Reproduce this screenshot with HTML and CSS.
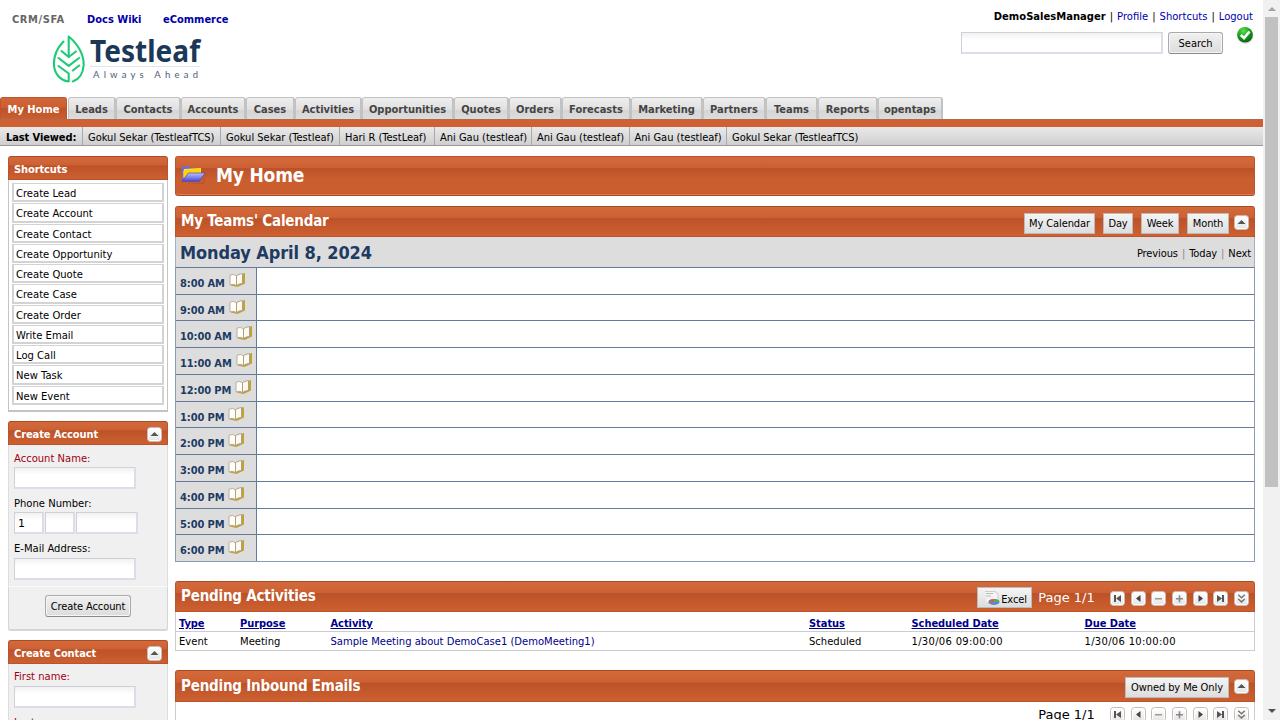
FILE: index.html
```html
<!DOCTYPE html>
<html lang="en">
<head>
<meta charset="utf-8">
<title>My Home | CRM/SFA</title>
<link rel="stylesheet" href="styles.css">
</head>
<body>
<svg class="defs" width="0" height="0">
  <defs>
    <linearGradient id="btn" x1="0" y1="0" x2="0" y2="1"><stop offset="0" stop-color="#fff"/><stop offset="1" stop-color="#e6e6e6"/></linearGradient>
    <linearGradient id="blue" x1="0" y1="0" x2="0" y2="1"><stop offset="0" stop-color="#b9c0ff"/><stop offset="1" stop-color="#4a4ad0"/></linearGradient>
    <radialGradient id="green" cx=".4" cy=".25" r=".8"><stop offset="0" stop-color="#5be04c"/><stop offset=".55" stop-color="#149a1c"/><stop offset="1" stop-color="#075a0b"/></radialGradient>
    <symbol id="base" viewBox="0 0 15 15"><rect x=".5" y=".5" width="14" height="14" rx="3" fill="#fff" stroke="#c9bab4"/><rect x="2" y="2" width="11" height="11" rx="1.500" fill="url(#btn)"/></symbol>
    <symbol id="up" viewBox="0 0 15 15"><use href="#base"/><path d="M3.500 9L7.500 5L11.500 9Z" fill="#555"/></symbol>
    <symbol id="first" viewBox="0 0 15 15"><use href="#base"/><path d="M4 4h2v7H4zM11 4v7L6 7.500Z" fill="#555"/></symbol>
    <symbol id="prev" viewBox="0 0 15 15"><use href="#base"/><path d="M9.500 4v7L5 7.500Z" fill="#444"/></symbol>
    <symbol id="minus" viewBox="0 0 15 15"><use href="#base"/><path d="M4 7h7v1.500h-7z" fill="#999"/></symbol>
    <symbol id="plus" viewBox="0 0 15 15"><use href="#base"/><path d="M4 7h7v1.500h-7zM6.700 4.200h1.600v7H6.700z" fill="#888"/></symbol>
    <symbol id="next" viewBox="0 0 15 15"><use href="#base"/><path d="M5.500 4v7L10 7.500Z" fill="#444"/></symbol>
    <symbol id="last" viewBox="0 0 15 15"><use href="#base"/><path d="M9 4h2v7H9zM4 4v7L9 7.500Z" fill="#555"/></symbol>
    <symbol id="all" viewBox="0 0 15 15"><use href="#base"/><path d="M4.200 3.800l3.300 2.900l3.300-2.900M4.200 8l3.300 2.900l3.300-2.900" fill="none" stroke="#777" stroke-width="1.500"/></symbol>
    <symbol id="book" viewBox="0 0 17 16"><path d="M13.500 2L16 .8V11.500L8.500 15L1.500 13.500Z" fill="#c2a03a"/><path d="M1 3.200Q4.500 1.300 7.500 3.800V13.500Q4.500 11.500 1 12.800Z" fill="#fffefa" stroke="#b5a696" stroke-width=".9"/><path d="M7.500 3.800Q9.500 2 13.500 1.500V11.500Q10 11.500 7.500 13.500Z" fill="#fbf9f2" stroke="#a89a7c" stroke-width=".9"/></symbol>
  </defs>
</svg>
<div class="page">
  <header class="top">
    <div class="brand">
      <nav class="apps"><span class="app on">CRM/SFA</span><a class="app docs">Docs Wiki</a><a class="app">eCommerce</a></nav>
      <svg class="logo" width="160" height="48" viewBox="0 0 160 48">
        <g fill="none" stroke="#1ccb75" stroke-width="2.100" stroke-linecap="round" stroke-linejoin="round">
          <path d="M11.500 6.500C5 13 1.900 21 1.900 29C2 38 8 45.500 16.700 46.500V38.500L6.500 31"/>
          <path d="M16.700 22V1.500C26 9 32 20 31.700 30C31 39 27 44.500 20.800 46.500"/>
          <path d="M9.500 16L16.700 22L24 16.500M6.500 23L16.700 30.800L27 23M20.800 35.500L27.300 30.500"/>
        </g>
        <text class="logo-name" x="38" y="26.500" textLength="110" lengthAdjust="spacingAndGlyphs">Testleaf</text>
        <path d="M38 31.500h110" stroke="#e4e7ea"/>
        <text class="logo-tag" x="41" y="42.500" textLength="105">Always Ahead</text>
      </svg>
    </div>
    <div class="user">
      <div class="userlinks"><b>DemoSalesManager</b><i>|</i><a>Profile</a><i>|</i><a>Shortcuts</a><i>|</i><a>Logout</a></div>
      <div class="search"><span class="field big"></span><span class="button">Search</span>
        <svg class="ok" width="18" height="18" viewBox="0 0 18 18"><circle cx="9.300" cy="9.800" r="8" fill="#bbb" opacity=".6"/><circle cx="9" cy="8.800" r="7.800" fill="url(#green)"/><path d="M4.800 9L8 12L13.500 5.500" fill="none" stroke="#fff" stroke-width="2.600"/></svg>
      </div>
    </div>
  </header>
  <nav class="tabs">
    <a class="tab active w67">My Home</a><a class="tab w48">Leads</a><a class="tab w65">Contacts</a><a class="tab w65">Accounts</a><a class="tab w49">Cases</a><a class="tab w67b">Activities</a><a class="tab w92">Opportunities</a><a class="tab w55">Quotes</a><a class="tab w53">Orders</a><a class="tab w69">Forecasts</a><a class="tab w72">Marketing</a><a class="tab w63">Partners</a><a class="tab w52">Teams</a><a class="tab w60">Reports</a><a class="tab w65">opentaps</a>
  </nav>
  <div class="recent">
    <b class="r0">Last Viewed:</b><a class="r1">Gokul Sekar (TestleafTCS)</a><a class="r2">Gokul Sekar (Testleaf)</a><a class="r3">Hari R (TestLeaf)</a><a class="r4">Ani Gau (testleaf)</a><a class="r5">Ani Gau (testleaf)</a><a class="r5">Ani Gau (testleaf)</a><a class="r6">Gokul Sekar (TestleafTCS)</a>
  </div>
  <div class="columns">
    <aside class="side">
      <section class="shortcuts">
        <h3 class="head small">Shortcuts</h3>
        <div class="links"><a>Create Lead</a><a>Create Account</a><a>Create Contact</a><a>Create Opportunity</a><a>Create Quote</a><a>Create Case</a><a>Create Order</a><a>Write Email</a><a>Log Call</a><a>New Task</a><a>New Event</a></div>
      </section>
      <section class="form account">
        <h3 class="head small">Create Account<svg class="ic"><use href="#up"/></svg></h3>
        <div class="fields">
          <label class="req">Account Name:</label><div class="row"><span class="field"></span></div>
          <label>Phone Number:</label><div class="row"><span class="field cc">1</span><span class="field cc"></span><span class="field num"></span></div>
          <label class="mail">E-Mail Address:</label><div class="row"><span class="field"></span></div>
        </div>
        <div class="submit"><span class="button">Create Account</span></div>
      </section>
      <section class="form contact">
        <h3 class="head small">Create Contact<svg class="ic"><use href="#up"/></svg></h3>
        <div class="fields">
          <label class="req">First name:</label><div class="row"><span class="field"></span></div>
          <label class="req">Last name:</label>
        </div>
      </section>
    </aside>
    <main class="main">
      <h1 class="title">
        <svg width="26" height="22" viewBox="0 0 26 22"><path d="M2 18.500L22 19L25 9L23 20Z" fill="#8e3a1b" opacity=".4"/><path d="M.5 2.500L8 2L9.500 4H20V8L16 16H1Z" fill="#6f69dc"/><path d="M3 5L20 4V9.500H2.500Z" fill="#ffe81a"/><path d="M2.300 7L7 5.500L19 5V9L5 14H2.300Z" fill="#ffd400"/><path d="M7.500 9H24L18.500 17.300H1Z" fill="url(#blue)" stroke="#4b45b5" stroke-width=".7"/></svg>
        <span>My Home</span>
      </h1>
      <section class="calendar">
        <div class="head large"><h2>My Teams' Calendar</h2><div class="tools"><span class="flat b71">My Calendar</span><span class="flat b30">Day</span><span class="flat b37">Week</span><span class="flat b42">Month</span><svg class="ic"><use href="#up"/></svg></div></div>
        <div class="day"><h2>Monday April 8, 2024</h2><div class="move">Previous<i>|</i>Today<i>|</i>Next</div></div>
        <div class="hours">
          <div class="hour"><b>8:00 AM<svg><use href="#book"/></svg></b></div>
          <div class="hour"><b>9:00 AM<svg><use href="#book"/></svg></b></div>
          <div class="hour"><b>10:00 AM<svg><use href="#book"/></svg></b></div>
          <div class="hour"><b>11:00 AM<svg><use href="#book"/></svg></b></div>
          <div class="hour"><b>12:00 PM<svg><use href="#book"/></svg></b></div>
          <div class="hour"><b>1:00 PM<svg><use href="#book"/></svg></b></div>
          <div class="hour"><b>2:00 PM<svg><use href="#book"/></svg></b></div>
          <div class="hour"><b>3:00 PM<svg><use href="#book"/></svg></b></div>
          <div class="hour"><b>4:00 PM<svg><use href="#book"/></svg></b></div>
          <div class="hour"><b>5:00 PM<svg><use href="#book"/></svg></b></div>
          <div class="hour"><b>6:00 PM<svg><use href="#book"/></svg></b></div>
        </div>
      </section>
      <section class="pending">
        <div class="head large"><h2>Pending Activities</h2>
          <div class="pager"><span class="flat excel"><svg width="17" height="15" viewBox="0 0 17 15"><path d="M1 .5H11L14 3V12H3" fill="#f4f4f4" stroke="#ccc"/><path d="M2 2.500h7M2 5h5" stroke="#bbb"/><ellipse cx="10" cy="11" rx="5.500" ry="3" fill="#5d87d6"/><path d="M10 11L4.500 10.500Q5 8 10 8Z" fill="#d95f3c"/><path d="M10 11V8Q15 8 15.500 10.800Z" fill="#5cab4c"/></svg>Excel</span><span class="count">Page 1/1</span><svg class="ic"><use href="#first"/></svg><svg class="ic"><use href="#prev"/></svg><svg class="ic"><use href="#minus"/></svg><svg class="ic"><use href="#plus"/></svg><svg class="ic"><use href="#next"/></svg><svg class="ic"><use href="#last"/></svg><svg class="ic"><use href="#all"/></svg></div></div>
        <div class="table">
          <div class="tr th"><a>Type</a><a>Purpose</a><a>Activity</a><a>Status</a><a>Scheduled Date</a><a>Due Date</a></div>
          <div class="tr"><span>Event</span><span>Meeting</span><span class="link">Sample Meeting about DemoCase1 (DemoMeeting1)</span><span>Scheduled</span><span class="date">1/30/06 09:00:00</span><span class="date">1/30/06 10:00:00</span></div>
        </div>
      </section>
      <section class="inbound">
        <div class="head large"><h2>Pending Inbound Emails</h2><div class="tools"><span class="flat b104">Owned by Me Only</span><svg class="ic"><use href="#up"/></svg></div></div>
        <div class="pager under"><span class="count">Page 1/1</span><svg class="ic"><use href="#first"/></svg><svg class="ic"><use href="#prev"/></svg><svg class="ic"><use href="#minus"/></svg><svg class="ic"><use href="#plus"/></svg><svg class="ic"><use href="#next"/></svg><svg class="ic"><use href="#last"/></svg><svg class="ic"><use href="#all"/></svg></div>
      </section>
    </main>
  </div>
</div>
<div class="scrollbar"><span class="arrow-up"></span><span class="thumb"></span><span class="arrow-down"></span></div>
</body>
</html>
```
FILE: styles.css
```css
* { box-sizing: border-box; }
body { margin: 0; width: 1280px; height: 720px; overflow: hidden; display: flex; background: #fff; color: #000; font: 11px/14px "DejaVu Sans Condensed", "Noto Sans", sans-serif; white-space: nowrap; }
h1, h2, h3 { margin: 0; }
i { font-style: normal; }
svg { display: block; flex: none; }
.defs { position: absolute; }
.page { width: 1263px; height: 720px; overflow: hidden; }
.top { height: 97px; display: flex; justify-content: space-between; }
.apps { display: flex; padding: 13px 0 0 12px; font-weight: bold; }
.app { color: #00a; }
.app.on { width: 75px; color: #666; letter-spacing: .6px; }
.app.docs { width: 76px; }
.logo { margin: 8px 0 0 52px; }
.logo-name { font: bold 30px "Noto Sans", sans-serif; fill: #1b3858; }
.logo-tag { font: 9.500px "Lato", sans-serif; fill: #4b6078; }
.user { padding: 10px 9px 0 0; }
.userlinks { display: flex; justify-content: flex-end; gap: 4px; font: 10px/13px "DejaVu Sans", sans-serif; padding-right: 1px; }
.userlinks a { color: #00a; }
.search { display: flex; margin: 3px 0 0 3px; }
.field { display: block; width: 122px; height: 22px; border: 1px solid #cfd0dc; border-width: 1px 2px 2px 1px; border-color: #cfd0dc #dcdde8 #dcdde8 #cfd0dc; background: linear-gradient(#f1f1f1, #fff 7px); padding: 4px 3px; font-size: 11px; line-height: 14px; }
.field.big { width: 202px; margin-top: 6px; }
.search .button { width: 55px; height: 22px; margin: 6px 13px 0 5px; }
.button { display: flex; align-items: center; justify-content: center; border: 1px solid #aaa; border-bottom-color: #888; border-radius: 3px; background: linear-gradient(#f0f0f0, #dcdcdc); box-shadow: inset 0 0 0 1px #f6f6f6; padding-top: 2px; }
.tabs { display: flex; height: 23px; border-bottom: 1px solid #b06a50; }
.tab { height: 22px; border: 1px solid #c2c2c2; border-width: 1px 2px 0 1px; border-radius: 3px 3px 0 0; background: linear-gradient(#eee, #e0e0e0 55%, #d5d5d5 56%, #dcdcdc); color: #444; font-weight: bold; text-align: center; line-height: 23px; }
.tab.active { background: linear-gradient(#d16638, #cb5f31 45%, #bb5228 46%, #cb5e2f); border-color: #bd5630; border-right-width: 1px; margin-right: 1px; color: #fff; }
.w48 { width: 48px; } .w49 { width: 49px; } .w52 { width: 52px; } .w53 { width: 53px; } .w55 { width: 55px; } .w60 { width: 60px; } .w63 { width: 63px; } .w65 { width: 65px; } .w67, .w67b { width: 67px; } .w69 { width: 69px; } .w72 { width: 72px; } .w92 { width: 92px; }
.recent { display: flex; height: 26px; border-top: 7px solid #cf6033; background: linear-gradient(#e9e9e9, #cfcfcf); border-bottom: 1px solid #999; line-height: 21px; }
.recent a { border-left: 1px solid #aaa; padding-left: 5px; }
.r0 { width: 82px; padding-left: 6px; letter-spacing: -.1px; }
.r1 { width: 138px; } .r2 { width: 119px; } .r3 { width: 95px; } .r4 { width: 97px; } .r5 { width: 97.500px; } .r6 { width: 140px; }
.columns { display: flex; gap: 7px; padding: 10px 8px 0; }
.side { width: 160px; }
.head { display: flex; justify-content: space-between; color: #fff; border: 1px solid #b9552e; border-top-color: #a84a24; border-radius: 3px 3px 0 0; background: linear-gradient(#d36a3c, #cd6032 38%, #bb5228 39%, #ce6030); }
.head.small { height: 24px; padding: 3px 5px 0; font: bold 11px/20px "DejaVu Sans Condensed", sans-serif; letter-spacing: -.1px; }
.head.large { height: 31px; padding: 0 5px; }
.head h2 { font-size: 15px; line-height: 28px; letter-spacing: -.2px; }
.ic { width: 15px; height: 15px; }
.head.small .ic { margin-top: 2px; }
.links { height: 232px; border: 1px solid #c4c4c4; border-top: 0; border-bottom-width: 2px; padding: 3px 3px 4px; display: flex; flex-direction: column; font: 10px/16px "DejaVu Sans", sans-serif; }
.links a { flex: 1; border: 2px solid #d3d3d3; border-width: 1px 2px 2px; padding: 1px 0 0 2px; margin-bottom: 1px; min-height: 0; line-height: 17px; }
.form { margin-top: 9px; background: #f0f0f0; font: 10px/14px "DejaVu Sans", sans-serif; }
.account { height: 210px; border-radius: 3px; }
.fields { padding: 7px 5px 0; border: 1px solid #ddd; border-width: 0 1px; }
.fields label { display: block; height: 15px; }
.fields .mail { height: 16px; }
.req { color: #a00012; }
.row { display: flex; gap: 1px; height: 30px; }
.field.cc { width: 30px; } .field.num { width: 62px; }
.account .fields { height: 142px; border-bottom: 1px solid #fafafa; }
.submit { height: 44px; padding-top: 8px; display: flex; justify-content: center; border: 1px solid #d5d5d5; border-width: 0 1px 2px; border-radius: 0 0 3px 3px; }
.submit .button { width: 86px; height: 22px; font: 11px/14px "DejaVu Sans Condensed", sans-serif; letter-spacing: -.1px; }
.contact .fields { padding-top: 6px; }
.contact label { height: 16px; }
.main { width: 1080px; }
.title { height: 40px; display: flex; align-items: center; gap: 9px; padding: 0 5px 2px; color: #fff; font-size: 19px; line-height: 24px; letter-spacing: -.2px; border: 1px solid #b9552e; border-bottom-color: #a84a24; border-radius: 3px; background: linear-gradient(#d36a3c, #cd6032 29%, #bb5228 30%, #cb5e2f 60%); box-shadow: inset 0 -1px #dd7a50; }
.calendar { margin-top: 10px; }
.tools { display: flex; gap: 8px; padding-top: 6px; }
.tools .ic { margin-top: 2px; margin-left: -2px; }
.tools .flat { margin-right: 0; }
.flat { height: 21px; border: 1px solid #bbb; background: linear-gradient(#f4f4f4, #ddd); color: #000; text-align: center; line-height: 20px; letter-spacing: -.1px; }
.tools .ic { margin-left: -3px; }
.b71 { width: 71px; } .b30 { width: 30px; } .b37 { width: 38px; } .b42 { width: 42px; } .b104 { width: 104px; }
.day { height: 31px; display: flex; justify-content: space-between; background: #ddd; border: 1px solid #a5b2c6; border-top: 0; border-bottom-color: #667b9b; padding: 0 3px 0 4px; }
.day h2 { color: #1d3b62; font-size: 18px; line-height: 31px; letter-spacing: -.1px; }
.move { line-height: 33px; letter-spacing: -.1px; }
.move i { color: #888; margin: 0 4px; }
.hours { height: 294px; display: grid; grid-template-rows: repeat(11, minmax(0, 1fr)); border: 1px solid #8c9bb5; border-width: 0 1px; }
.hour { min-height: 0; border-bottom: 1px solid #667b9b; }
.hour:last-child { border-color: #8c9bb5; }
.hour b { display: flex; align-items: flex-start; width: 81px; height: 100%; background: #ddd; border-right: 1px solid #667b9b; padding-left: 4px; color: #1d3b62; line-height: 32px; letter-spacing: -.1px; }
.hour svg { width: 17px; height: 16px; margin: 4px 0 0 4px; }
.pending { margin-top: 19px; }
.pager { display: flex; align-items: center; font: 13px/16px "DejaVu Sans", sans-serif; }
.head .pager { padding-top: 2px; }
.pager .ic { margin-left: 5.700px; }
.pager .count { width: 66px; margin-left: 6px; }
.head .count, .head .pager .ic { margin-top: 1px; }
.flat.excel { display: flex; width: 55px; margin-bottom: 1px; padding: 2px 0 0 6px; gap: 0; font: 11px/19px "DejaVu Sans Condensed", sans-serif; }
.excel svg { margin-top: 1px; }
.table { height: 39px; border: 1px solid #ccc; border-top: 0; }
.tr { display: grid; grid-template-columns: 61px 90.500px 478.500px 102.500px 173px 1fr; height: 18px; padding-left: 3px; font: 10px/20px "DejaVu Sans", sans-serif; }
.tr.th { height: 20px; border-bottom: 1px solid #ccc; font: bold 11px/23px "DejaVu Sans Condensed", sans-serif; color: #00008b; letter-spacing: -.05px; }
.tr.th a { text-decoration: underline; }
.date { letter-spacing: .3px; }
.link { color: #00008b; }
.inbound { margin-top: 19px; }
.inbound .head { height: 32px; }
.inbound .head h2 { line-height: 30px; }
.under { height: 40px; justify-content: flex-end; align-items: flex-start; padding: 5px 5px 0 0; border: 1px solid #ccc; border-top: 0; }
.scrollbar { width: 17px; height: 720px; background: #f1f1f1; display: flex; flex-direction: column; align-items: center; justify-content: space-between; }
.thumb { width: 13px; height: 470px; background: #c1c1c1; margin: 6px 0 auto; }
.arrow-up { margin-top: 7px; border: 4px solid transparent; border-top: 0; border-bottom-color: #a3a3a3; }
.arrow-down { margin-bottom: 7px; border: 4px solid transparent; border-bottom: 0; border-top-color: #505050; }
```
